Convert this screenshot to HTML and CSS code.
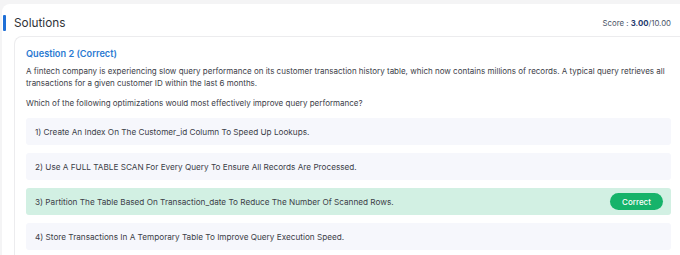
FILE: index.html
```html
<!DOCTYPE html>
<html>
<head>
<meta charset="utf-8">
<link rel="stylesheet" href="styles.css">
</head>
<body>
<div class="panel">
  <div class="panel-head">
    <h2 class="title">Solutions</h2>
    <div class="score">Score : <b>3.00</b>/10.00</div>
  </div>
  <div class="qcard">
    <div class="qtitle">Question 2 (Correct)</div>
    <p class="qtext">A fintech company is experiencing slow query performance on its customer transaction history table, which now contains millions of records. A typical query retrieves all transactions for a given customer ID within the last 6 months.</p>
    <p class="qtext ask">Which of the following optimizations would most effectively improve query performance?</p>
    <div class="options">
      <div class="opt">1) Create An Index On The Customer_id Column To Speed Up Lookups.</div>
      <div class="opt">2) Use A FULL TABLE SCAN For Every Query To Ensure All Records Are Processed.</div>
      <div class="opt correct">3) Partition The Table Based On Transaction_date To Reduce The Number Of Scanned Rows.<span class="badge">Correct</span></div>
      <div class="opt">4) Store Transactions In A Temporary Table To Improve Query Execution Speed.</div>
    </div>
  </div>
</div>
</body>
</html>
```

FILE: styles.css
```css
html, body {
  margin: 0;
  padding: 0;
  background: #f4f4f5;
  font-family: Inter, "Noto Sans", sans-serif;
  color: #3b3f46;
}
body {
  padding: 4px 0 0 2px;
  height: 255px;
  overflow: hidden;
  box-sizing: border-box;
}
.panel {
  background: #fff;
  border-radius: 8px 0 0 0;
  padding: 11px 0 0 12px;
  height: 251px;
  box-sizing: border-box;
  overflow: hidden;
}
.panel-head {
  display: flex;
  align-items: center;
  justify-content: space-between;
  padding-right: 9px;
  height: 16px;
  position: relative;
}
.panel-head::before {
  content: "";
  position: absolute;
  left: -11px;
  top: 0;
  width: 3px;
  height: 16px;
  background: #1f6fd6;
  border-radius: 1px;
}
.title {
  margin: 0;
  font-size: 11.8px;
  font-weight: 400;
  color: #2f3237;
}
.score {
  font-size: 7.8px;
  color: #4a5568;
}
.score b {
  color: #1e3a6e;
  font-weight: 700;
}
.qcard {
  margin-top: 5px;
  border: 1px solid #ececee;
  border-right: none;
  border-radius: 8px 0 0 8px;
  padding: 11px 9px 20px 11px;
}
.qtitle {
  color: #2a7ad2;
  font-size: 9.2px;
  font-weight: 600;
  line-height: 12px;
}
.qtext {
  margin: 5px 0 0 0;
  font-size: 8px;
  line-height: 12px;
  color: #3c4048;
}
.qtext.ask {
  margin-top: 8px;
}
.options {
  display: flex;
  flex-direction: column;
  gap: 8px;
  margin-top: 9px;
}
.opt {
  background: #f6f7fc;
  height: 27px;
  border-radius: 3px;
  display: flex;
  align-items: center;
  justify-content: space-between;
  padding: 0 8px 0 9px;
  font-size: 8.2px;
  color: #3c4048;
}
.opt.correct {
  background: #d2f0e3;
}
.badge {
  background: #16b36a;
  color: #fff;
  font-size: 8px;
  font-weight: 500;
  height: 17px;
  width: 53px;
  border-radius: 9px;
  display: flex;
  align-items: center;
  justify-content: center;
}
```
